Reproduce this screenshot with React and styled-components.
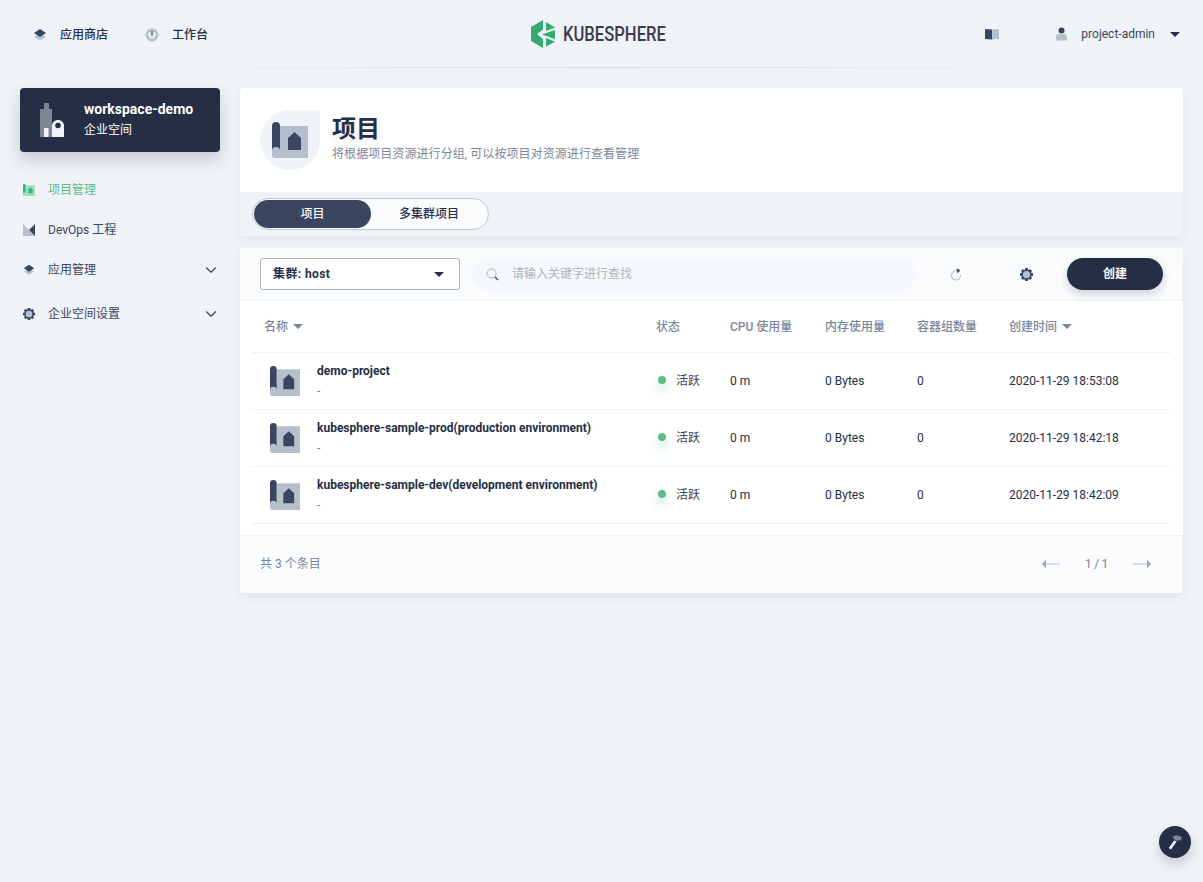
import styled, { createGlobalStyle } from "styled-components";
import { ChevronDown } from "lucide-react";

const GlobalStyle = createGlobalStyle`
  html, body {
    margin: 0;
    padding: 0;
    background: #eff3f8;
  }
  body {
    font-family: Roboto, "Noto Sans CJK SC", sans-serif;
    font-size: 12px;
    line-height: 20px;
    color: #252e45;
  }
  * {
    box-sizing: border-box;
  }
`;

const Page = styled.div`
  width: 1203px;
  height: 882px;
  position: relative;
  overflow: hidden;
`;

const Header = styled.header`
  height: 68px;
  position: relative;
  display: grid;
  grid-template-columns: 1fr auto 1fr;
  align-items: center;
  &::after {
    content: "";
    position: absolute;
    left: 0;
    right: 0;
    bottom: 0;
    height: 1px;
    background: linear-gradient(90deg, #eff3f8 8%, #d8dee5 50%, #eff3f8 92%);
  }
`;

const HeaderLeft = styled.div`
  display: flex;
  align-items: center;
  padding: 2px 0 0 33px;
`;

const HeaderLink = styled.a`
  display: flex;
  align-items: center;
  gap: 13px;
  margin-right: 37px;
  font-weight: 500;
  color: #252e45;
`;

const Logo = styled.div`
  display: flex;
  align-items: center;
  gap: 8px;
  margin-left: -6px;
`;

const LogoText = styled.span`
  font-family: Roboto, sans-serif;
  font-weight: 500;
  font-size: 20px;
  line-height: 24px;
  color: #3e3b4d;
  display: inline-block;
  transform: scaleX(0.83);
  transform-origin: left center;
  width: 103px;
  white-space: nowrap;
`;

const HeaderRight = styled.div`
  display: flex;
  justify-content: flex-end;
  align-items: center;
  padding-right: 23px;
`;

const Spacer = styled.span`
  width: 57px;
`;

const UserName = styled.span`
  margin: 0 15px 0 14px;
  color: #3a4560;
`;

const Caret = styled.i`
  display: inline-block;
  width: 0;
  height: 0;
  border-left: 5px solid transparent;
  border-right: 5px solid transparent;
  border-top: 5px solid ${(p) => p.$color || "#252e45"};
`;

const Body = styled.div`
  display: flex;
  padding: 20px 20px 0;
  gap: 20px;
`;

const Sidebar = styled.aside`
  width: 200px;
  flex: none;
`;

const WorkspaceCard = styled.div`
  height: 64px;
  border-radius: 4px;
  background: #252e45;
  box-shadow: 0 8px 16px 0 rgba(36, 46, 66, 0.2);
  display: flex;
  align-items: center;
  padding-left: 20px;
  gap: 20px;
  color: #fff;
`;

const WorkspaceText = styled.div`
  padding-bottom: 2px;
`;

const WorkspaceName = styled.div`
  font-size: 14px;
  font-weight: 700;
  line-height: 20px;
`;

const WorkspaceSub = styled.div`
  line-height: 20px;
  margin-top: 1px;
`;

const Nav = styled.nav`
  margin-top: 18px;
`;

const NavItem = styled.div`
  height: ${(p) => p.$h || 40}px;
  display: flex;
  align-items: center;
  padding: 0 0 0 3px;
  gap: 13px;
  color: ${(p) => (p.$active ? "#5dbd8a" : "#3a4560")};
  svg.chev {
    margin-left: auto;
    color: #3a4560;
  }
`;

const NavIconBox = styled.span`
  width: 12px;
  height: 12px;
  display: flex;
  align-items: center;
  justify-content: center;
`;

const Main = styled.main`
  width: 943px;
  flex: none;
`;

const Banner = styled.section`
  border-radius: 4px;
  overflow: hidden;
  box-shadow: 0 4px 8px 0 rgba(36, 46, 66, 0.06);
`;

const BannerTop = styled.div`
  height: 104px;
  background: #fff;
  display: flex;
  align-items: center;
  padding: 0 20px;
  gap: 12px;
`;

const BannerIcon = styled.div`
  width: 60px;
  height: 60px;
  border-radius: 50% 0 50% 50%;
  background: #eff3f8;
  display: flex;
  align-items: center;
  justify-content: center;
`;

const BannerText = styled.div`
  padding-bottom: 4px;
`;

const BannerTitle = styled.h1`
  margin: 0;
  font-size: 24px;
  line-height: 32px;
  font-weight: 600;
  color: #252e45;
  text-shadow: 0 4px 8px rgba(36, 46, 66, 0.1);
`;

const BannerDesc = styled.p`
  margin: 0;
  line-height: 18px;
  letter-spacing: 0.07px;
  color: #79879c;
`;

const TabBar = styled.div`
  height: 44px;
  background: #eff3f8;
  padding: 6px 12px;
`;

const TabGroup = styled.div`
  width: 237px;
  height: 32px;
  border-radius: 16px;
  border: 1px solid #c1c9d1;
  background: #f9fbfd;
  padding: 1px;
  display: flex;
`;

const Tab = styled.div`
  width: ${(p) => (p.$active ? 117 : 116)}px;
  border-radius: 14px;
  display: flex;
  align-items: center;
  justify-content: center;
  color: ${(p) => (p.$active ? "#fff" : "#252e45")};
  background: ${(p) => (p.$active ? "#3a4560" : "transparent")};
  font-weight: 500;
`;

const Card = styled.section`
  margin-top: 12px;
  border-radius: 4px;
  background: #fff;
  overflow: hidden;
  box-shadow: 0 4px 8px 0 rgba(36, 46, 66, 0.06);
`;

const Toolbar = styled.div`
  height: 53px;
  background: #f9fbfd;
  border-bottom: 1px solid #eff3f8;
  display: flex;
  align-items: center;
  padding: 0 20px;
`;

const ClusterSelect = styled.div`
  width: 200px;
  height: 32px;
  border: 1px solid #abb4be;
  border-radius: 3px;
  background: #fff;
  display: flex;
  align-items: center;
  justify-content: space-between;
  padding: 0 15px 0 12px;
  font-weight: 700;
  letter-spacing: 0.4px;
`;

const SearchBox = styled.div`
  width: 443px;
  height: 32px;
  margin-left: 12px;
  border-radius: 16px;
  background: #f4f7fb;
  display: flex;
  align-items: center;
  padding-left: 14px;
  gap: 13px;
  color: #abb4be;
`;

const ToolIcon = styled.span`
  width: 16px;
  height: 16px;
  display: flex;
  align-items: center;
  justify-content: center;
  margin-left: ${(p) => p.$ml}px;
`;

const CreateButton = styled.button`
  all: unset;
  width: 96px;
  height: 32px;
  margin-left: 33px;
  border-radius: 16px;
  background: #252e45;
  color: #fff;
  font-weight: 700;
  text-align: center;
  line-height: 32px;
  box-shadow: 0 4px 8px 0 rgba(36, 46, 66, 0.2);
`;

const Table = styled.div`
  padding: 0 12px 11px;
`;

const Row = styled.div`
  display: grid;
  grid-template-columns: 392px 74px 95px 92px 92px 1fr;
  align-items: center;
  padding-left: 12px;
  height: ${(p) => p.$h}px;
  border-bottom: 1px solid #eff3f8;
`;

const HeadCell = styled.div`
  display: flex;
  align-items: center;
  gap: 5px;
  color: #79879c;
  font-weight: 500;
`;

const NameCell = styled.div`
  display: flex;
  align-items: center;
  gap: 17px;
  padding-left: 6px;
`;

const ProjectName = styled.div`
  font-weight: 700;
  line-height: 20px;
  white-space: nowrap;
  color: #252e45;
`;

const ProjectDesc = styled.div`
  line-height: 20px;
  color: #79879c;
`;

const StatusCell = styled.div`
  display: flex;
  align-items: center;
  gap: 10px;
  color: #3a4560;
`;

const Dot = styled.i`
  display: block;
  width: 8px;
  height: 8px;
  margin: 0 0 2px 2px;
  border-radius: 50%;
  background: #5dbd8a;
  box-shadow: 0 6px 8px 2px rgba(85, 188, 138, 0.22);
`;

const Footer = styled.div`
  height: 58px;
  background: #f9fbfd;
  border-top: 1px solid #eff3f8;
  display: flex;
  align-items: center;
  justify-content: space-between;
  padding: 0 32px 2px 20px;
  color: #79879c;
`;

const Pager = styled.div`
  display: flex;
  align-items: center;
  gap: 25px;
  letter-spacing: -0.3px;
`;

const FloatButton = styled.button`
  all: unset;
  position: absolute;
  right: 12px;
  bottom: 24px;
  width: 32px;
  height: 32px;
  border-radius: 50%;
  background: #252e45;
  box-shadow: 0 6px 12px 0 rgba(36, 46, 66, 0.2);
  display: flex;
  align-items: center;
  justify-content: center;
`;

const StackIcon = () => (
  <svg width="14" height="12" viewBox="0 0 14 12">
    <path d="M1 7.500l6-3 6 3-6 4z" fill="#b6c0cd" />
    <path d="M1 4l6-4 6 4-6 4z" fill="#3a4560" />
  </svg>
);

const DialIcon = () => (
  <svg width="14" height="14" viewBox="0 0 14 14">
    <circle cx="7" cy="7" r="6.500" fill="#b6c0cd" />
    <circle cx="7" cy="7" r="3.800" fill="#e6eaf1" />
    <path d="M6.400 3h1.200v4.500H6.400z" fill="#3a4560" />
  </svg>
);

const LogoIcon = () => (
  <svg width="24" height="28" viewBox="0 0 24 28">
    <path d="M0 7L12 0v9.500L6 14.300 12 19v9L0 21z" fill="#35a96f" />
    <path d="M15 2l9 5.500L15 11z" fill="#35a96f" />
    <path d="M24 10v9l-13-4.500z" fill="#35a96f" />
    <path d="M15 18l9 3.700L15 26.500z" fill="#35a96f" />
  </svg>
);

const BookIcon = () => (
  <svg width="14" height="12" viewBox="0 0 14 12">
    <path d="M0 1l7 .5V11.500L0 11z" fill="#3a4560" />
    <path d="M7 1.500L14 1v10l-7 .5z" fill="#b6c0cd" />
  </svg>
);

const UserIcon = () => (
  <svg width="11" height="14" viewBox="0 0 11 14">
    <circle cx="5.500" cy="3.500" r="3" fill="#3a4560" />
    <path d="M0 13.500V10c0-1.800 1.500-3 3-3h5c1.500 0 3 1.200 3 3v3.500z" fill="#b6c0cd" />
  </svg>
);

const WorkspaceIcon = () => (
  <svg width="24" height="34" viewBox="0 0 24 34">
    <path d="M0 34V6h4V0h5v6h3v28z" fill="#7d8494" />
    <path d="M4 34v-9h4.500v9z" fill="#eff3f8" />
    <path d="M12 34V23c0-3.500 2.500-6 6-6s6 2.500 6 6v11z" fill="#eff3f8" />
    <circle cx="18" cy="22.500" r="2.800" fill="#252e45" />
  </svg>
);

// same blueprint drawing at three sizes: banner, rows, sidebar
const ProjectIcon = ({ size = 30, light = "#b6c0cd", dark = "#3a4560" }) => (
  <svg width={size} height={size} viewBox="0 0 36 36">
    <path d="M8 4h28v32H3a3 3 0 0 1-3-3V23h8z" fill={light} />
    <path d="M0 4a4 4 0 0 1 8 0v25a4 4 0 0 0-8 0z" fill={dark} />
    <path d="M16 28V16l6.500-6 6.500 6v12z" fill={dark} />
  </svg>
);

const DevopsIcon = () => (
  <svg width="12" height="12" viewBox="0 0 12 12">
    <path d="M0 0l12 12H0z" fill="#b6c0cd" />
    <path d="M12 0v12L6 6z" fill="#3a4560" />
  </svg>
);

const GearIcon = ({ size = 12 }) => (
  <svg width={size} height={size} viewBox="0 0 14 14">
    <g fill="#3a4560">
      {[0, 45, 90, 135].map((a) => (
        <rect key={a} x="5.500" y="0" width="3" height="14" transform={`rotate(${a} 7 7)`} />
      ))}
    </g>
    <circle cx="7" cy="7" r="5.600" fill="#3a4560" />
    <circle cx="7" cy="7" r="3.900" fill="#b6c0cd" />
  </svg>
);

const SearchIcon = () => (
  <svg width="13" height="13" viewBox="0 0 13 13">
    <circle cx="5.500" cy="5.500" r="4.500" fill="none" stroke="#c1c9d1" strokeWidth="1.300" />
    <path d="M9 9l3 3" stroke="#3a4560" strokeWidth="1.300" />
  </svg>
);

const RefreshIcon = () => (
  <svg width="12" height="13" viewBox="0 0 12 13">
    <path d="M7.500 2.800A4.700 4.700 0 1 0 10.700 7" fill="none" stroke="#c1c9d1" strokeWidth="1.300" />
    <path d="M7 0l3.500 3L7 5z" fill="#3a4560" transform="rotate(-10 8 3)" />
  </svg>
);

const ArrowIcon = ({ flip }) => (
  <svg width="18" height="10" viewBox="0 0 18 10" style={flip ? { transform: "scaleX(-1)" } : undefined}>
    <path d="M4 4h14v2H4z" fill="#d8dee5" />
    <path d="M0 5l4-4.500v9z" fill="#a0aab7" />
  </svg>
);

const HammerIcon = () => (
  <svg width="16" height="16" viewBox="0 0 14 14">
    <path d="M6.500 5.500L8.300 6.700 3.500 13.500 1.500 12.300z" fill="#eff3f8" />
    <path d="M5 2.500C7 .8 10 .8 13 3l-1 2.800-2-.8-.8 1.200L6 4.300z" fill="#79879c" />
  </svg>
);

const projects = [
  { name: "demo-project", time: "2020-11-29 18:53:08" },
  { name: "kubesphere-sample-prod(production environment)", time: "2020-11-29 18:42:18" },
  { name: "kubesphere-sample-dev(development environment)", time: "2020-11-29 18:42:09" },
];

export default function App() {
  return (
    <Page>
      <GlobalStyle />
      <Header>
        <HeaderLeft>
          <HeaderLink>
            <StackIcon />
            应用商店
          </HeaderLink>
          <HeaderLink>
            <DialIcon />
            工作台
          </HeaderLink>
        </HeaderLeft>
        <Logo>
          <LogoIcon />
          <LogoText>KUBESPHERE</LogoText>
        </Logo>
        <HeaderRight>
          <BookIcon />
          <Spacer />
          <UserIcon />
          <UserName>project-admin</UserName>
          <Caret />
        </HeaderRight>
      </Header>

      <Body>
        <Sidebar>
          <WorkspaceCard>
            <WorkspaceIcon />
            <WorkspaceText>
              <WorkspaceName>workspace-demo</WorkspaceName>
              <WorkspaceSub>企业空间</WorkspaceSub>
            </WorkspaceText>
          </WorkspaceCard>
          <Nav>
            <NavItem $active>
              <NavIconBox>
                <ProjectIcon size={12} light="#9ee0bf" dark="#3cb07c" />
              </NavIconBox>
              项目管理
            </NavItem>
            <NavItem>
              <NavIconBox>
                <DevopsIcon />
              </NavIconBox>
              DevOps 工程
            </NavItem>
            <NavItem>
              <NavIconBox>
                <StackIcon />
              </NavIconBox>
              应用管理
              <ChevronDown className="chev" size={18} strokeWidth={1.5} />
            </NavItem>
            <NavItem $h={48}>
              <NavIconBox>
                <GearIcon size={12} />
              </NavIconBox>
              企业空间设置
              <ChevronDown className="chev" size={18} strokeWidth={1.5} />
            </NavItem>
          </Nav>
        </Sidebar>

        <Main>
          <Banner>
            <BannerTop>
              <BannerIcon>
                <ProjectIcon size={36} />
              </BannerIcon>
              <BannerText>
                <BannerTitle>项目</BannerTitle>
                <BannerDesc>将根据项目资源进行分组, 可以按项目对资源进行查看管理</BannerDesc>
              </BannerText>
            </BannerTop>
            <TabBar>
              <TabGroup>
                <Tab $active>项目</Tab>
                <Tab>多集群项目</Tab>
              </TabGroup>
            </TabBar>
          </Banner>

          <Card>
            <Toolbar>
              <ClusterSelect>
                集群: host
                <Caret />
              </ClusterSelect>
              <SearchBox>
                <SearchIcon />
                请输入关键字进行查找
              </SearchBox>
              <ToolIcon $ml={33}>
                <RefreshIcon />
              </ToolIcon>
              <ToolIcon $ml={54}>
                <GearIcon size={13} />
              </ToolIcon>
              <CreateButton>创建</CreateButton>
            </Toolbar>
            <Table>
              <Row $h={52}>
                <HeadCell>
                  名称 <Caret $color="#79879c" />
                </HeadCell>
                <HeadCell>状态</HeadCell>
                <HeadCell>CPU 使用量</HeadCell>
                <HeadCell>内存使用量</HeadCell>
                <HeadCell>容器组数量</HeadCell>
                <HeadCell>
                  创建时间 <Caret $color="#79879c" />
                </HeadCell>
              </Row>
              {projects.map((p) => (
                <Row $h={57} key={p.name}>
                  <NameCell>
                    <ProjectIcon size={30} />
                    <div>
                      <ProjectName>{p.name}</ProjectName>
                      <ProjectDesc>-</ProjectDesc>
                    </div>
                  </NameCell>
                  <StatusCell>
                    <Dot />
                    活跃
                  </StatusCell>
                  <div>0 m</div>
                  <div>0 Bytes</div>
                  <div>0</div>
                  <div>{p.time}</div>
                </Row>
              ))}
            </Table>
            <Footer>
              <span>共 3 个条目</span>
              <Pager>
                <ArrowIcon />
                <span>1 / 1</span>
                <ArrowIcon flip />
              </Pager>
            </Footer>
          </Card>
        </Main>
      </Body>

      <FloatButton>
        <HammerIcon />
      </FloatButton>
    </Page>
  );
}
